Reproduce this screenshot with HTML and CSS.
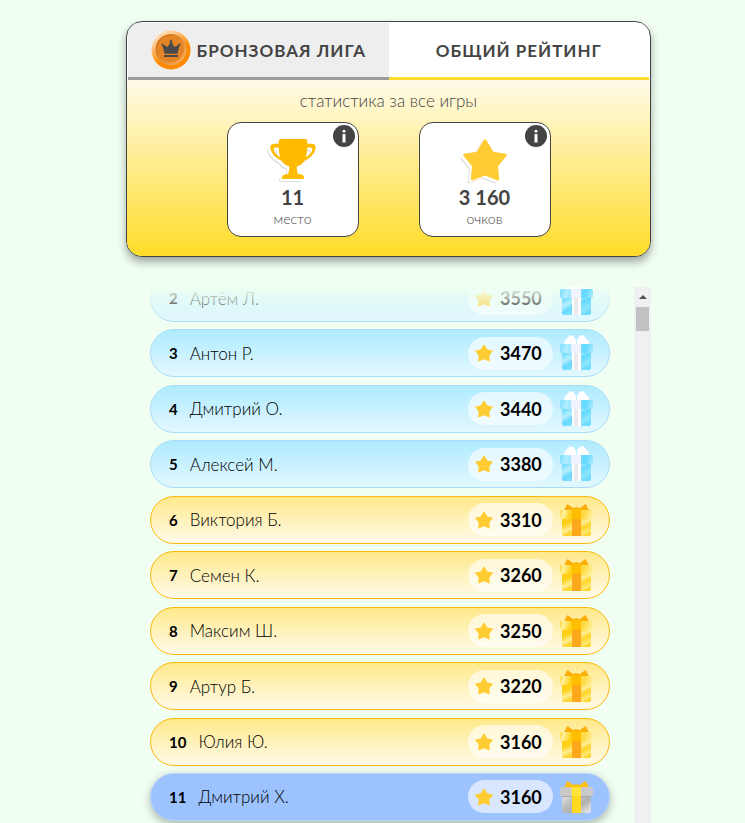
FILE: index.html
```html
<!DOCTYPE html>
<html lang="ru">
<head>
    <meta charset="utf-8">
    <meta name="viewport" content="width=device-width, initial-scale=1">
    <title>Общий рейтинг</title>
    <link rel="stylesheet" href="styles.css">
</head>
<body>
    <svg class="sprite" aria-hidden="true">
        <defs>
            <linearGradient id="blueBox" gradientUnits="userSpaceOnUse" x1="0" y1="14" x2="14" y2="40">
                <stop offset="0" stop-color="#6fdcff"/>
                <stop offset=".25" stop-color="#7fe0ff"/>
                <stop offset=".42" stop-color="#b8efff"/>
                <stop offset=".6" stop-color="#66d9ff"/>
                <stop offset=".85" stop-color="#8ee5ff"/>
                <stop offset="1" stop-color="#6fdcff"/>
            </linearGradient>
            <linearGradient id="blueLid" gradientUnits="userSpaceOnUse" x1="0" y1="6" x2="32" y2="16">
                <stop offset="0" stop-color="#6fdcff"/>
                <stop offset=".25" stop-color="#b5ecff"/>
                <stop offset=".45" stop-color="#8fe4ff"/>
                <stop offset=".8" stop-color="#62d8ff"/>
                <stop offset="1" stop-color="#a0e9ff"/>
            </linearGradient>
            <linearGradient id="goldBox" gradientUnits="userSpaceOnUse" x1="0" y1="14" x2="12" y2="40">
                <stop offset="0" stop-color="#ffc40a"/>
                <stop offset=".35" stop-color="#ffd21c"/>
                <stop offset=".55" stop-color="#ffee96"/>
                <stop offset=".7" stop-color="#ffd427"/>
                <stop offset=".9" stop-color="#ffe772"/>
                <stop offset="1" stop-color="#ffd427"/>
            </linearGradient>
            <linearGradient id="goldLid" gradientUnits="userSpaceOnUse" x1="0" y1="6" x2="32" y2="16">
                <stop offset="0" stop-color="#ffd42a"/>
                <stop offset=".15" stop-color="#fff0a0"/>
                <stop offset=".35" stop-color="#ffd21c"/>
                <stop offset=".75" stop-color="#ffdc48"/>
                <stop offset="1" stop-color="#fff0a0"/>
            </linearGradient>
            <linearGradient id="greyBox" gradientUnits="userSpaceOnUse" x1="0" y1="10" x2="20" y2="38">
                <stop offset="0" stop-color="#b8b8b8"/>
                <stop offset=".3" stop-color="#d8d8d8"/>
                <stop offset=".5" stop-color="#bcbcbc"/>
                <stop offset=".75" stop-color="#b2b2b2"/>
                <stop offset="1" stop-color="#e0e0e0"/>
            </linearGradient>
            <linearGradient id="medalRim" x1="0" y1="0" x2=".6" y2="1">
                <stop offset="0" stop-color="#fff3e4"/>
                <stop offset=".3" stop-color="#ffc98d"/>
                <stop offset=".7" stop-color="#ff8a00"/>
            </linearGradient>
            <linearGradient id="medalCore" x1="0" y1="0" x2="1" y2="1">
                <stop offset="0" stop-color="#c9650e"/>
                <stop offset="1" stop-color="#ffb562"/>
            </linearGradient>
        </defs>
        <symbol id="star" viewBox="0 0 44 42">
            <path d="M20.500 1.200q1.500-2 3 0l6.800 11.500 12.300 2q2.300.6.800 2.300l-8.400 10.200 1.200 12.800q-.2 2.200-2.300 1.300L22 36.500 10.100 41.300Q8 42 7.800 40L9 27.200.6 17q-1.500-1.700.8-2.300l12.300-2z"/>
        </symbol>
        <symbol id="gift-blue" viewBox="0 0 33 36">
            <path d="M16 9.500C16.500 3 14 0 9.500.2Q9.300 2 7.200 2.400 7 4.300 5 5 4 7 4 9.500zM17 9.500C16.500 3 19 0 23.500.2q.2 1.800 2.300 2.200.2 1.900 2.200 2.600 1 2 1 4.500z" fill="#fff"/>
            <path d="M2 17h29v16q0 2-2 2H4q-2 0-2-2z" fill="url(#blueBox)"/>
            <rect y="9" width="33" height="9" rx="1.500" fill="url(#blueLid)"/>
            <path d="M12 18h9v17h-9z" fill="#fff"/>
            <path d="M14 18h4v17h-4z" fill="#ebebef"/>
            <path d="M11 9h10v9H11z" fill="#eef3ff"/>
        </symbol>
        <symbol id="gift-gold" viewBox="0 0 33 36">
            <path d="M4 8.500 7 2.500q.5-.7 1.300 0L13 6q3.500-1.500 7 0l4.700-3.500q.8-.7 1.300 0l3 6z" fill="#fbae08"/>
            <path d="M2 17h29v15q0 2-2 2H4q-2 0-2-2z" fill="url(#goldBox)"/>
            <rect y="8" width="33" height="9" rx="1.500" fill="url(#goldLid)"/>
            <path d="M12 17h9v17h-9z" fill="#fca81a"/>
            <path d="M11.500 7h9.500v10h-9.500z" fill="#ffbf00"/>
        </symbol>
        <symbol id="gift-grey" viewBox="0 0 33 36">
            <path d="M4 8.500 7 2.500q.5-.7 1.300 0L13 6q3.500-1.500 7 0l4.700-3.500q.8-.7 1.300 0l3 6z" fill="#ffc20a"/>
            <path d="M2 17h29v15q0 2-2 2H4q-2 0-2-2z" fill="url(#greyBox)"/>
            <rect y="8" width="33" height="9" rx="1.500" fill="#c9c9c9"/>
            <path d="M2 17h29v1H2z" fill="#a5a5a5"/>
            <path d="M12 17h9v17h-9z" fill="#ffd91f"/>
            <path d="M11.500 8h9.500v9h-9.500z" fill="#ffe23a"/>
        </symbol>
    </svg>

    <main>
        <section class="card">
            <div class="tabs">
                <button class="tab" type="button">
                    <svg class="medal" viewBox="0 0 40 40" aria-hidden="true">
                        <circle cx="20" cy="20" r="19.500" fill="url(#medalRim)"/>
                        <circle cx="20" cy="19.500" r="15.500" fill="url(#medalCore)"/>
                        <circle cx="19.500" cy="19" r="13.500" fill="#e38426"/>
                        <path d="M13.500 23.800 11.500 15.800q-1.700-.5-.9-1.900 1.700-.9 2.100 1l4 2.100 2.500-4.700q-1.200-1.900.8-2.300 2 .4.800 2.300l2.500 4.700 4-2.100q.4-1.900 2.100-1 .8 1.400-.9 1.900l-2 8zM13.300 25h13.400q1.200 1 0 2H13.300q-1.200-1 0-2z" fill="#4a4a4a"/>
                    </svg>
                    Бронзовая лига
                </button>
                <button class="tab active" type="button">Общий рейтинг</button>
            </div>
            <div class="stats">
                <p>статистика за все игры</p>
                <div class="boxes">
                    <div class="box">
                        <button class="info" type="button" aria-label="О месте">
                            <svg viewBox="0 0 22 22"><circle cx="11" cy="11" r="11"/><path d="M9.500 5.500q1.500-1.500 3 0v1.500q-1.500 1.500-3 0zM9.500 9h3v8.500h-3z" fill="#fff"/></svg>
                        </button>
                        <svg class="prize cup" viewBox="0 0 48 44" aria-hidden="true">
                            <path d="M11 0h26q2 0 2 2v3h4q6 0 4.500 6-2 7-11.500 12-4 5-8 5.500v3q0 4 1.500 5.500h2q4 .5 4 3.500v1.500h-23V40.500q0-3 4-3.500h2q1.500-1.500 1.500-5.500v-3q-4-.5-8-5.500Q2.500 18 .5 11-1 5 5 5h4V2q0-2 2-2zM9 9H6q-3 0-2 3 1 3.500 6.500 7Q9 14 9 9zm30 0q0 5-1.500 10 5.500-3.500 6.500-7 1-3-2-3z"/>
                        </svg>
                        <strong>11</strong>
                        <span>место</span>
                    </div>
                    <div class="box">
                        <button class="info" type="button" aria-label="Об очках">
                            <svg viewBox="0 0 22 22"><circle cx="11" cy="11" r="11"/><path d="M9.500 5.500q1.500-1.500 3 0v1.500q-1.500 1.500-3 0zM9.500 9h3v8.500h-3z" fill="#fff"/></svg>
                        </button>
                        <svg class="prize star" aria-hidden="true"><use href="#star"/></svg>
                        <strong>3 160</strong>
                        <span>очков</span>
                    </div>
                </div>
            </div>
        </section>

        <section class="rating">
            <div class="view">
                <ol class="list">
                    <li class="row blue"><b>2</b><span class="name">Артём Л.</span><span class="score"><svg><use href="#star"/></svg>3550</span><svg class="gift"><use href="#gift-blue"/></svg></li>
                    <li class="row blue"><b>3</b><span class="name">Антон Р.</span><span class="score"><svg><use href="#star"/></svg>3470</span><svg class="gift"><use href="#gift-blue"/></svg></li>
                    <li class="row blue"><b>4</b><span class="name">Дмитрий О.</span><span class="score"><svg><use href="#star"/></svg>3440</span><svg class="gift"><use href="#gift-blue"/></svg></li>
                    <li class="row blue"><b>5</b><span class="name">Алексей М.</span><span class="score"><svg><use href="#star"/></svg>3380</span><svg class="gift"><use href="#gift-blue"/></svg></li>
                    <li class="row gold"><b>6</b><span class="name">Виктория Б.</span><span class="score"><svg><use href="#star"/></svg>3310</span><svg class="gift"><use href="#gift-gold"/></svg></li>
                    <li class="row gold"><b>7</b><span class="name">Семен К.</span><span class="score"><svg><use href="#star"/></svg>3260</span><svg class="gift"><use href="#gift-gold"/></svg></li>
                    <li class="row gold"><b>8</b><span class="name">Максим Ш.</span><span class="score"><svg><use href="#star"/></svg>3250</span><svg class="gift"><use href="#gift-gold"/></svg></li>
                    <li class="row gold"><b>9</b><span class="name">Артур Б.</span><span class="score"><svg><use href="#star"/></svg>3220</span><svg class="gift"><use href="#gift-gold"/></svg></li>
                    <li class="row gold"><b>10</b><span class="name">Юлия Ю.</span><span class="score"><svg><use href="#star"/></svg>3160</span><svg class="gift"><use href="#gift-gold"/></svg></li>
                    <li class="row me"><b>11</b><span class="name">Дмитрий Х.</span><span class="score"><svg><use href="#star"/></svg>3160</span><svg class="gift"><use href="#gift-grey"/></svg></li>
                </ol>
            </div>
            <div class="scrollbar">
                <button class="up" type="button" aria-label="Вверх"></button>
                <div class="thumb"></div>
            </div>
        </section>
    </main>
</body>
</html>
```

FILE: styles.css
```css
* {
    box-sizing: border-box;
}
body {
    margin: 0;
    background: #f1fff2;
    color: #444;
    font-family: Lato, "Open Sans", sans-serif;
    font-size: 17px;
}
button {
    padding: 0;
    border: none;
    background: none;
    color: inherit;
    font-family: inherit;
    cursor: pointer;
}
.sprite {
    display: block;
    width: 0;
    height: 0;
}
main {
    display: flex;
    flex-direction: column;
    gap: 30px;
    height: 100vh;
    padding: 21px 94px 0 126px;
}

/* card */
.card {
    flex: none;
    overflow: hidden;
    padding: 1px 1px 0;
    border: 1px solid #444;
    border-radius: 16px;
    background: #fff;
    box-shadow: 0 5px 8px rgba(0, 0, 0, 0.35);
}
.tabs {
    display: flex;
}
.tab {
    display: flex;
    flex: 1;
    align-items: center;
    justify-content: center;
    gap: 6px;
    height: 57px;
    border-bottom: 3px solid #9b9b9f;
    background: #eee;
    font-size: 17px;
    font-weight: 700;
    letter-spacing: 1px;
    text-transform: uppercase;
    white-space: nowrap;
}
.tab.active {
    border-color: #ffdc2e;
    background: #fff;
}
.medal {
    width: 40px;
    height: 40px;
}
.stats {
    margin: 0 -1px;
    padding: 10px 0 19px;
    background: linear-gradient(#fffbe8, #ffdc29);
    text-align: center;
}
.stats p {
    margin: 0 0 10px;
    font-size: 17px;
    font-weight: 300;
    line-height: 22px;
}
.boxes {
    display: flex;
    justify-content: center;
    gap: 60px;
}
.box {
    position: relative;
    display: flex;
    flex-direction: column;
    align-items: center;
    width: 132px;
    height: 115px;
    padding-top: 16px;
    border: 1px solid #444;
    border-radius: 14px;
    background: #fff;
}
.info {
    position: absolute;
    top: 2px;
    right: 3px;
    width: 22px;
    height: 22px;
}
.info svg {
    display: block;
    fill: #444;
}
.prize {
    width: 46px;
    height: 42px;
    overflow: visible;
    fill: #ffbb00;
    filter: drop-shadow(-1px 1px 0 #fff) drop-shadow(-1px 1px 0 #fff) drop-shadow(-1px 1px 0 #ddd);
}
.prize.star {
    fill: #ffcc33;
}
.box strong {
    margin-top: 4px;
    font-size: 20px;
    line-height: 24px;
}
.box span {
    font-size: 14px;
    font-weight: 300;
    line-height: 20px;
}

/* rating */
.rating {
    display: flex;
    flex: 1;
    min-height: 0;
}
.view {
    position: relative;
    flex: 1;
    overflow: hidden;
    padding: 0 24px;
}
.view::before {
    content: "";
    position: absolute;
    z-index: 1;
    top: 0;
    left: 0;
    right: 0;
    height: 33px;
    background: linear-gradient(#f1fff2, rgba(241, 255, 242, 0));
}
.list {
    display: flex;
    flex-direction: column;
    justify-content: space-between;
    height: 547px;
    margin: -13px 0 0;
    padding: 0;
    list-style: none;
}
.row {
    display: flex;
    align-items: center;
    height: 48px;
    padding: 0 16px 0 18px;
    border: 1px solid #a9dcfa;
    border-radius: 24px;
    color: #000;
}
.blue {
    background: linear-gradient(#aeebff, #e3f8ff);
}
.gold {
    border-color: #fcb90c;
    background: linear-gradient(#ffe98a, #fffaea);
}
.me {
    border-color: #b9d3fb;
    background: #9dc3ff;
    box-shadow: 0 3px 8px rgba(0, 0, 0, 0.3);
}
.row b {
    font-size: 15px;
}
.name {
    flex: 1;
    margin-left: 12px;
    font-weight: 300;
}
.score {
    display: flex;
    align-items: center;
    gap: 7px;
    width: 85px;
    height: 33px;
    padding-left: 7px;
    border-radius: 17px;
    background: rgba(255, 255, 255, 0.6);
    font-size: 18px;
    font-weight: 700;
}
.score svg {
    width: 18px;
    height: 18px;
    fill: #ffcc33;
}
.gift {
    position: relative;
    z-index: 2;
    width: 33px;
    height: 36px;
    margin-left: 7px;
}

/* scrollbar */
.scrollbar {
    display: flex;
    flex-direction: column;
    align-items: center;
    width: 17px;
    background: #f0f0f0;
}
.up {
    display: flex;
    align-items: center;
    justify-content: center;
    width: 17px;
    height: 20px;
}
.up::before {
    content: "";
    border: 4px solid transparent;
    border-top: none;
    border-bottom-color: #505050;
}
.thumb {
    width: 13px;
    height: 24px;
    background: #c1c1c1;
}
```
